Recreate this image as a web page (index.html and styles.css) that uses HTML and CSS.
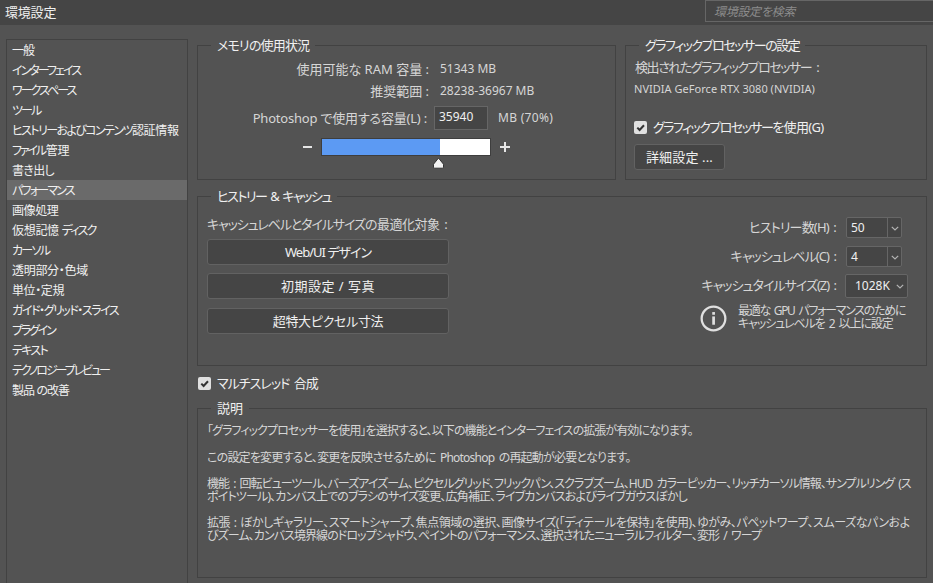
FILE: index.html
```html
<!DOCTYPE html>
<html lang="ja">
<head>
<meta charset="utf-8">
<title>環境設定</title>
<link rel="stylesheet" href="styles.css">
</head>
<body>
<header class="titlebar">
  <h1>環境設定</h1>
  <div class="search"><span class="t3">環境設定を検索</span></div>
</header>
<div class="layout">
  <nav class="sidebar">
    <a class="t10">一般</a>
    <a class="t19">インターフェイス</a>
    <a class="t19">ワークスペース</a>
    <a class="t19">ツール</a>
    <a><span class="t16">ヒストリーおよびコンテンツ</span><span class="t3">認証情報</span></a>
    <a><span class="t23">ファイル </span><span class="t3">管理</span></a>
    <a class="t7">書き出し</a>
    <a class="t18 selected">パフォーマンス</a>
    <a class="t4">画像処理</a>
    <a><span class="t3">仮想記憶 </span><span class="t18">ディスク</span></a>
    <a class="t17">カーソル</a>
    <a class="t3">透明部分・色域</a>
    <a class="t4">単位・定規</a>
    <a class="t14">ガイド・グリッド・スライス</a>
    <a class="t23">プラグイン</a>
    <a class="t17">テキスト</a>
    <a class="t20">テクノロジープレビュー</a>
    <a class="t9">製品 の改善</a>
  </nav>
  <main class="content">
    <div class="top-row">
      <fieldset class="memory">
        <legend class="t8">メモリの使用状況</legend>
        <div class="stats">
          <span class="label">使用可能な RAM 容量 :</span><span class="value">51343 MB</span>
          <span class="label">推奨範囲 :</span><span class="value">28238-36967 MB</span>
        </div>
        <div class="usage">
          <span class="label t2">Photoshop で使用する容量(L) :</span>
          <span class="input">35940</span>
          <span class="unit">MB (70%)</span>
        </div>
        <div class="slider-row">
          <svg class="step" viewBox="0 0 10 10"><path d="M0 5H9"/></svg>
          <div class="slider"><div class="fill"></div>
            <svg class="thumb" viewBox="0 0 13 12"><path d="M6.5 1 11.5 7.2V10.2Q11.5 11.2 10.5 11.2H2.5Q1.5 11.2 1.5 10.2V7.2Z"/></svg>
          </div>
          <svg class="step" viewBox="0 0 10 10"><path d="M0 5H10M5 0V10"/></svg>
        </div>
      </fieldset>
      <fieldset class="gpu">
        <legend class="t14">グラフィックプロセッサーの設定</legend>
        <div class="detected">検出されたグラフィックプロセッサー :</div>
        <div class="gpu-name">NVIDIA GeForce RTX 3080 (NVIDIA)</div>
        <label class="check"><svg viewBox="0 0 13 13"><rect width="13" height="13" rx="2"/><path d="M3.3 6.6 5.6 9 10 4.2"/></svg><span><span class="t15">グラフィックプロセッサー</span><span class="t7">を使用(G)</span></span></label>
        <button class="details">詳細設定 ...</button>
      </fieldset>
    </div>
    <fieldset class="history">
      <legend class="t14 spaced">ヒストリー &amp; キャッシュ</legend>
      <div class="presets">
        <div class="caption"><span class="t11">キャッシュレベルとタイルサイズ</span><span class="t5 spaced">の最適化対象 :</span></div>
        <button class="t10">Web/UI デザイン</button>
        <button class="w5">初期設定 / 写真</button>
        <button class="t3">超特大ピクセル寸法</button>
      </div>
      <div class="cache">
        <div class="field"><span class="label t8">ヒストリー数(H) :</span><span class="combo"><b>50</b><i><svg viewBox="0 0 8 5"><path d="M.8.8 4 4 7.2.8"/></svg></i></span></div>
        <div class="field"><span class="label t9">キャッシュレベル(C) :</span><span class="combo"><b>4</b><i><svg viewBox="0 0 8 5"><path d="M.8.8 4 4 7.2.8"/></svg></i></span></div>
        <div class="field"><span class="label t10">キャッシュタイルサイズ(Z) :</span><span class="dropdown">1028K<svg viewBox="0 0 8 5"><path d="M.8.8 4 4 7.2.8"/></svg></span></div>
        <div class="info">
          <svg viewBox="0 0 26 26"><circle class="ring" cx="13" cy="13" r="11.4"/><rect x="11.8" y="11" width="2.6" height="8"/><rect x="11.8" y="6.8" width="2.6" height="2.6"/></svg>
          <p><span class="t13 spaced">最適な GPU パフォーマンスのために</span><br><span class="t11 spaced">キャッシュレベルを 2 以上に設定</span></p>
        </div>
      </div>
    </fieldset>
    <label class="check multi"><svg viewBox="0 0 13 13"><rect width="13" height="13" rx="2"/><path d="M3.3 6.6 5.6 9 10 4.2"/></svg><span class="t10 spaced">マルチスレッド 合成</span></label>
    <fieldset class="about">
      <legend>説明</legend>
      <p><span class="d1">「グラフィックプロセッサーを使用」を選択すると、以下の機能とインターフェイスの拡張が有効になります。</span></p>
      <p><span class="d2">この設定を変更すると、変更を反映させるために Photoshop の再起動が必要となります。</span></p>
      <p><span class="d3">機能 : 回転ビューツール、バーズアイズーム、ピクセルグリッド、フリックパン、スクラブズーム、HUD カラーピッカー、リッチカーソル情報、サンプルリング (ス</span><br><span class="d4">ポイトツール)、カンバス上でのブラシのサイズ変更、広角補正、ライブカンバスおよびライブガウスぼかし</span></p>
      <p><span class="d5">拡張 : ぼかしギャラリー、スマートシャープ、焦点領域の選択、画像サイズ(「ディテールを保持」を使用)、ゆがみ、パペットワープ、スムーズなパンおよ</span><br><span class="d6">びズーム、カンバス境界線のドロップシャドウ、ペイントのパフォーマンス、選択されたニューラルフィルター、変形 / ワープ</span></p>
    </fieldset>
  </main>
</div>
</body>
</html>
```
FILE: styles.css
```css
* { box-sizing: border-box; }
html, body { height: 583px; overflow: hidden; }
body {
  margin: 0;
  background: #535353;
  color: #d6d6d6;
  font: 13px/20px "Noto Sans", "Noto Sans CJK JP", sans-serif;
  font-feature-settings: "palt";
  white-space: nowrap;
}
svg { display: block; flex: none; }

.titlebar {
  display: flex;
  justify-content: space-between;
  height: 25px;
  background: #454545;
}
h1 { margin: 3px 0 0 5px; font-size: 13px; font-weight: 400; line-height: 18px; color: #f0f0f0; letter-spacing: -.2px; }
.search {
  width: 228px;
  height: 22px;
  padding-left: 8px;
  border: 1px solid #666;
  border-right: 0;
  background: #454545;
  color: #8c8c8c;
  font-size: 12px;
  font-style: italic;
  line-height: 22px;
}

.layout { display: flex; gap: 9px; padding-left: 6px; }
.sidebar {
  width: 182px;
  height: 560px;
  margin-top: 14px;
  border: 1px solid #424242;
  color: #f0f0f0;
  font-size: 12px;
}
.sidebar a { display: block; height: 20px; padding-left: 5px; line-height: 21px; white-space: pre; }
.sidebar .selected { background: #6a6a6a; }

.content { width: 730px; padding-top: 11px; }
fieldset { min-width: 0; margin: 0; padding: 0; border: 1px solid #424242; }
legend { height: 19px; margin-left: 13px; padding: 0 6px; line-height: 19px; color: #f0f0f0; }
.top-row { display: grid; grid-template-columns: 419px 302px; gap: 9px; height: 144px; }

.stats { display: grid; grid-template-columns: 231px auto; column-gap: 11px; padding-top: 3px; line-height: 22px; }
.label { text-align: right; }
.value, .unit, .input { font-size: 12px; }
.stats .value { line-height: 21px; }
.usage { display: flex; align-items: center; height: 24px; margin-top: 4px; }
.usage .label { width: 229px; line-height: 18px; }
.usage .label, .usage .unit { padding-bottom: 1px; }
.input {
  width: 54px;
  height: 24px;
  margin-left: 7px;
  padding-left: 4px;
  border: 1px solid #666;
  background: #454545;
  color: #f0f0f0;
  line-height: 20px;
}
.unit { margin-left: 10px; letter-spacing: .3px; }
.slider-row { display: flex; align-items: center; height: 18px; margin: 8px 0 0 105px; gap: 9px; }
.slider-row .slider { margin: 0 0 0 -1px; }
.step { width: 10px; height: 10px; stroke: #e6e6e6; stroke-width: 2; }
.slider { position: relative; width: 170px; height: 18px; border: 1px solid #3e3e3e; background: #fff; }
.fill { width: 70%; height: 100%; background: #5c9af3; }
.thumb { position: absolute; left: 110px; top: 18px; width: 13px; height: 12px; fill: #f2f2f2; stroke: #333; }

.gpu { padding-left: 8px; }
.gpu legend { margin-left: 5px; }
.detected { margin-top: 2px; padding-left: 1px; letter-spacing: -1.45px; word-spacing: 3px; }
.gpu-name { margin-top: 1px; font-size: 11px; line-height: 22px; letter-spacing: .03px; }
.check { display: flex; align-items: center; gap: 6px; height: 20px; color: #f0f0f0; }
.check svg { width: 13px; height: 13px; }
.check rect { fill: #e0e0e0; }
.check path { fill: none; stroke: #333; stroke-width: 2; }
.gpu .check { margin-top: 17px; }
button {
  padding: 0;
  border: 1px solid #626262;
  border-radius: 3px;
  background: #454545;
  color: #f0f0f0;
  font: inherit;
  font-feature-settings: inherit;
}
.details { display: block; width: 91px; height: 26px; margin-top: 7px; letter-spacing: .15px; }

.history { height: 179px; margin-top: 7px; }
.history > .presets { float: left; }
.presets { display: flex; flex-direction: column; width: 242px; margin: 9px 0 0 9px; }
.presets button { height: 26px; margin-bottom: 8.4px; line-height: 22px; }
.caption { height: 24px; line-height: 18px; }
.cache { float: right; width: 240px; margin: 11px 0 0; }
.field { display: flex; align-items: center; height: 21px; margin-bottom: 8px; }
.field .label { width: 150px; margin-right: 10px; line-height: 18px; padding-bottom: 1px; word-spacing: 2px; }
.combo, .dropdown { display: flex; border: 1px solid #666; border-radius: 2px; background: #454545; color: #f0f0f0; font-size: 12px; }
.combo { width: 56px; height: 21px; }
.combo b { width: 40px; padding-left: 4px; font-weight: 400; line-height: 19px; }
.combo i { display: flex; flex: 1; align-items: center; justify-content: center; border-left: 1px solid #666; }
.field svg { width: 8px; height: 5px; margin-top: 2px; fill: none; stroke: #b4b4b4; stroke-width: 1.2; }
.dropdown { align-items: center; gap: 6px; width: 63px; height: 24px; margin-left: -1px; padding-left: 9px; line-height: 20px; }
.info { display: flex; gap: 11px; margin-left: 14px; }
.info svg { width: 27px; height: 27px; margin-top: 1px; fill: #e0e0e0; }
.ring { fill: none; stroke: #e0e0e0; stroke-width: 2.2; }
.info p { margin: 0; font-size: 12px; line-height: 13px; }

.multi { height: 33px; padding: 1px 0 0 1px; }
.multi span { line-height: 20px; }

.about { height: 179px; padding-left: 9px; }
.about legend { margin-left: 4px; }
.about p { margin: 6px 0 14px; font-size: 12px; line-height: 13px; }
.about p + p { margin-bottom: 13px; }
.spaced { word-spacing: 2px; }

/* tracking steps, in tenths of a pixel */
.w5 { letter-spacing: .5px; }
.t2 { letter-spacing: -.2px; }
.t3 { letter-spacing: -.3px; }
.t4 { letter-spacing: -.4px; }
.t5 { letter-spacing: -.5px; }
.t7 { letter-spacing: -.68px; }
.t8 { letter-spacing: -.83px; }
.t9 { letter-spacing: -.93px; }
.t10 { letter-spacing: -1px; }
.t11 { letter-spacing: -1.1px; }
.t13 { letter-spacing: -1.3px; }
.t14 { letter-spacing: -1.48px; }
.t15 { letter-spacing: -1.55px; }
.t16 { letter-spacing: -1.6px; }
.t17 { letter-spacing: -1.7px; }
.t18 { letter-spacing: -1.8px; }
.t19 { letter-spacing: -1.95px; }
.t20 { letter-spacing: -2.05px; }
.t23 { letter-spacing: -2.2px; }
.d1 { letter-spacing: -.93px; }
.d2 { letter-spacing: -.78px; word-spacing: 2px; }
.d3 { letter-spacing: -.98px; word-spacing: 2px; }
.d4 { letter-spacing: -.84px; }
.d5 { letter-spacing: -.47px; word-spacing: 1px; }
.d6 { letter-spacing: -.93px; word-spacing: 2px; }
```
